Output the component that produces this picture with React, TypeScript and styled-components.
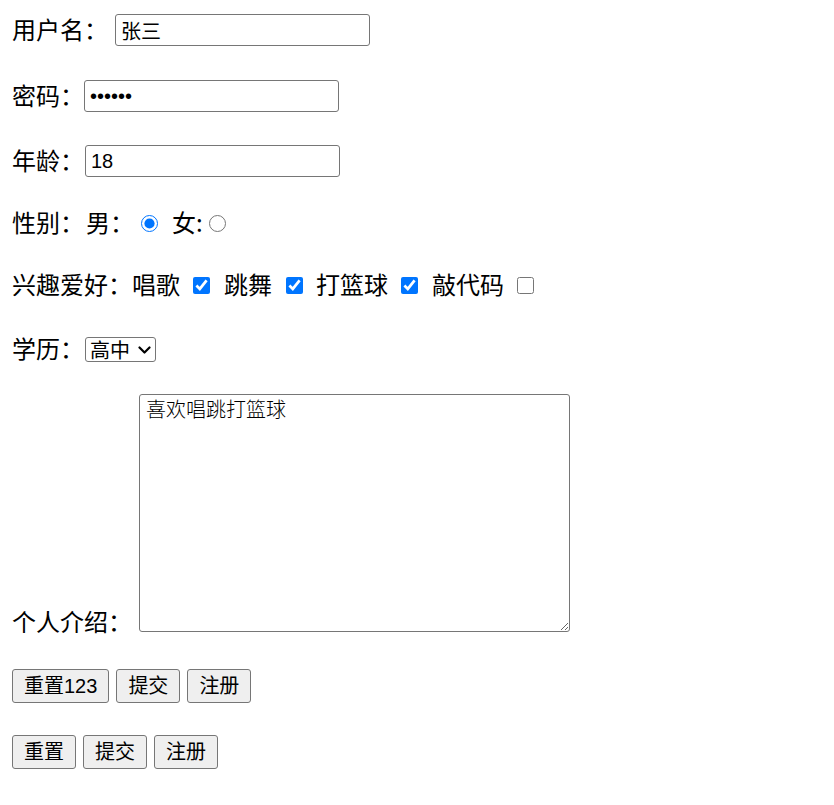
import React from "react";
import styled, { createGlobalStyle } from "styled-components";

const GlobalStyle = createGlobalStyle`
  html, body {
    margin: 0;
    padding: 0;
    background: #ffffff;
  }
  body {
    font-family: "Noto Sans CJK SC", "Liberation Sans", sans-serif;
    color: #000000;
  }
`;

const Form = styled.form`
  display: flex;
  flex-direction: column;
  align-items: flex-start;
  padding: 14px 0 0 12px;
`;

const Row = styled.div<{ $mt?: number; $h?: number; $end?: boolean }>`
  display: flex;
  align-items: ${(p) => (p.$end ? "flex-end" : "center")};
  height: ${(p) => p.$h ?? 32}px;
  margin-top: ${(p) => p.$mt ?? 0}px;
`;

const Label = styled.span<{ $ml?: number; $low?: boolean }>`
  font-family: "Noto Sans CJK SC", "Liberation Sans", sans-serif;
  font-size: 24px;
  line-height: 24px;
  white-space: nowrap;
  margin-left: ${(p) => p.$ml ?? 0}px;
  margin-bottom: ${(p) => (p.$low ? -1 : 3)}px;
`;

const TextInput = styled.input<{ $ml?: number }>`
  box-sizing: border-box;
  width: 255px;
  height: 32px;
  margin: 0 0 0 ${(p) => p.$ml ?? 0}px;
  padding: 1px 5px;
  border: 1px solid #767676;
  border-radius: 3px;
  background: #ffffff;
  font-family: "Liberation Sans", "Noto Sans CJK SC", sans-serif;
  font-size: 20px;
  color: #000000;
  outline: none;
`;

const Choice = styled.input<{ $ml?: number }>`
  width: 17px;
  height: 17px;
  margin: 0 0 0 ${(p) => p.$ml ?? 0}px;
  flex: none;
  accent-color: #0075ff;
`;

const SelectWrap = styled.span<{ $ml?: number }>`
  position: relative;
  display: inline-flex;
  margin-left: ${(p) => p.$ml ?? 0}px;
`;

const Select = styled.select`
  box-sizing: border-box;
  appearance: none;
  -webkit-appearance: none;
  width: 71px;
  height: 25px;
  margin: 0;
  padding: 0 20px 0 4px;
  border: 1px solid #767676;
  border-radius: 3px;
  background: #ffffff;
  font-family: "Noto Sans CJK SC", "Liberation Sans", sans-serif;
  font-size: 20px;
  line-height: 23px;
  color: #000000;
  outline: none;
`;

const Chevron = styled.svg`
  position: absolute;
  right: 5px;
  top: 9px;
  width: 13px;
  height: 8px;
  pointer-events: none;
`;

const TextArea = styled.textarea<{ $ml?: number }>`
  box-sizing: border-box;
  width: 431px;
  height: 238px;
  margin: 0 0 0 ${(p) => p.$ml ?? 0}px;
  padding: 2px 6px;
  border: 1px solid #767676;
  border-radius: 3px;
  background: #ffffff;
  font-family: "Noto Sans CJK SC", serif;
  font-weight: 300;
  font-size: 20px;
  line-height: 24px;
  color: #000000;
  outline: none;
`;

const Button = styled.button`
  box-sizing: border-box;
  height: 34px;
  margin: 0 7px 0 0;
  padding: 0 11px;
  border: 1px solid #767676;
  border-radius: 3px;
  background: #efefef;
  font-family: "Liberation Sans", "Noto Sans CJK SC", sans-serif;
  font-size: 20px;
  line-height: 22px;
  color: #000000;
  white-space: nowrap;
`;

export default function App() {
  return (
    <>
      <GlobalStyle />
      <Form onSubmit={(e) => e.preventDefault()}>
        <Row>
          <Label>用户名：</Label>
          <TextInput $ml={7} type="text" defaultValue="张三" />
        </Row>
        <Row $mt={34}>
          <Label>密码：</Label>
          <TextInput $ml={0} type="password" defaultValue="123456" />
        </Row>
        <Row $mt={33}>
          <Label>年龄：</Label>
          <TextInput $ml={1} type="text" defaultValue="18" />
        </Row>
        <Row $mt={30}>
          <Label>性别：</Label>
          <Label $ml={2}>男：</Label>
          <Choice $ml={7} type="radio" name="sex" defaultChecked />
          <Label $ml={14}>女:</Label>
          <Choice $ml={6} type="radio" name="sex" />
        </Row>
        <Row $mt={30}>
          <Label>兴趣爱好：</Label>
          <Label>唱歌</Label>
          <Choice $ml={13} type="checkbox" defaultChecked />
          <Label $ml={14}>跳舞</Label>
          <Choice $ml={14} type="checkbox" defaultChecked />
          <Label $ml={13}>打篮球</Label>
          <Choice $ml={13} type="checkbox" defaultChecked />
          <Label $ml={14}>敲代码</Label>
          <Choice $ml={13} type="checkbox" />
        </Row>
        <Row $mt={32}>
          <Label>学历：</Label>
          <SelectWrap $ml={1}>
            <Select defaultValue="高中">
              <option>初中</option>
              <option>高中</option>
              <option>大学</option>
            </Select>
            <Chevron viewBox="0 0 13 8">
              <polyline
                points="1.5,1.5 6.5,6.5 11.5,1.5"
                fill="none"
                stroke="#000"
                strokeWidth="2.2"
                strokeLinecap="round"
                strokeLinejoin="round"
              />
            </Chevron>
          </SelectWrap>
        </Row>
        <Row $mt={29} $h={238} $end>
          <Label $low>个人介绍：</Label>
          <TextArea $ml={7} defaultValue="喜欢唱跳打篮球" />
        </Row>
        <Row $mt={37} $h={34}>
          <Button type="reset">重置123</Button>
          <Button type="submit">提交</Button>
          <Button type="button">注册</Button>
        </Row>
        <Row $mt={32} $h={34}>
          <Button type="reset">重置</Button>
          <Button type="submit">提交</Button>
          <Button type="button">注册</Button>
        </Row>
      </Form>
    </>
  );
}
